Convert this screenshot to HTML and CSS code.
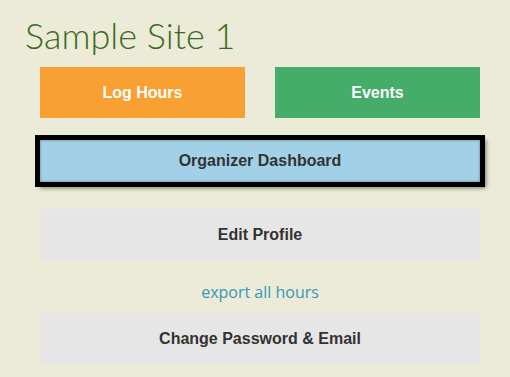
FILE: index.html
```html
<!DOCTYPE html>
<html lang="en">
<head>
    <meta charset="UTF-8">
    <meta name="viewport" content="width=device-width, initial-scale=1.0">
    <title>Sample Site 1</title>
    <link rel="stylesheet" href="styles.css">
</head>
<body>

<div class="page">
    <h1 class="site-title">Sample Site 1</h1>

    <div class="menu">
        <div class="button-row">
            <a href="#" class="btn btn-orange">Log Hours</a>
            <a href="#" class="btn btn-green">Events</a>
        </div>

        <a href="#" class="btn btn-blue btn-active">Organizer Dashboard</a>

        <a href="#" class="btn btn-grey btn-profile">Edit Profile</a>

        <a href="#" class="export-link">export all hours</a>

        <a href="#" class="btn btn-grey">Change Password &amp; Email</a>
    </div>
</div>

</body>
</html>
```

FILE: styles.css
```css
body {
    font-family: "Liberation Sans", Arial, sans-serif;
    background-color: #ebebd8;
    margin: 0;
}

.page {
    padding: 13px 30px 0 25px;
}

.site-title {
    font-family: Lato, "Open Sans", sans-serif;
    font-weight: 300;
    font-size: 36px;
    color: #3b6a1e;
    margin: 0;
    line-height: 44px;
}

.menu {
    width: 440px;
    margin-left: 15px;
    margin-top: 10px;
    display: flex;
    flex-direction: column;
}

.button-row {
    display: flex;
    gap: 30px;
}

.btn {
    display: block;
    flex: 1;
    height: 51px;
    line-height: 51px;
    text-align: center;
    font-size: 16px;
    font-weight: bold;
    text-decoration: none;
    color: #333;
}

.btn-orange {
    background-color: #f9a033;
    color: #ffffff;
}

.btn-green {
    background-color: #45ac6a;
    color: #ffffff;
}

.btn-blue {
    background-color: #a2d1e7;
}

.btn-active {
    height: 42px;
    line-height: 42px;
    margin-top: 22px;
    outline: 5px solid #000;
    box-shadow: 3px 3px 4px 3px rgba(0, 0, 0, 0.5), inset 0 0 3px rgba(0, 0, 0, 0.4);
}

.btn-grey {
    background-color: #e6e6e6;
}

.btn-profile {
    margin-top: 27px;
}

.export-link {
    font-family: "Open Sans", sans-serif;
    font-size: 16px;
    color: #3a95b9;
    text-decoration: none;
    text-align: center;
    line-height: 24px;
    margin: 20px 0 9px;
}
```
